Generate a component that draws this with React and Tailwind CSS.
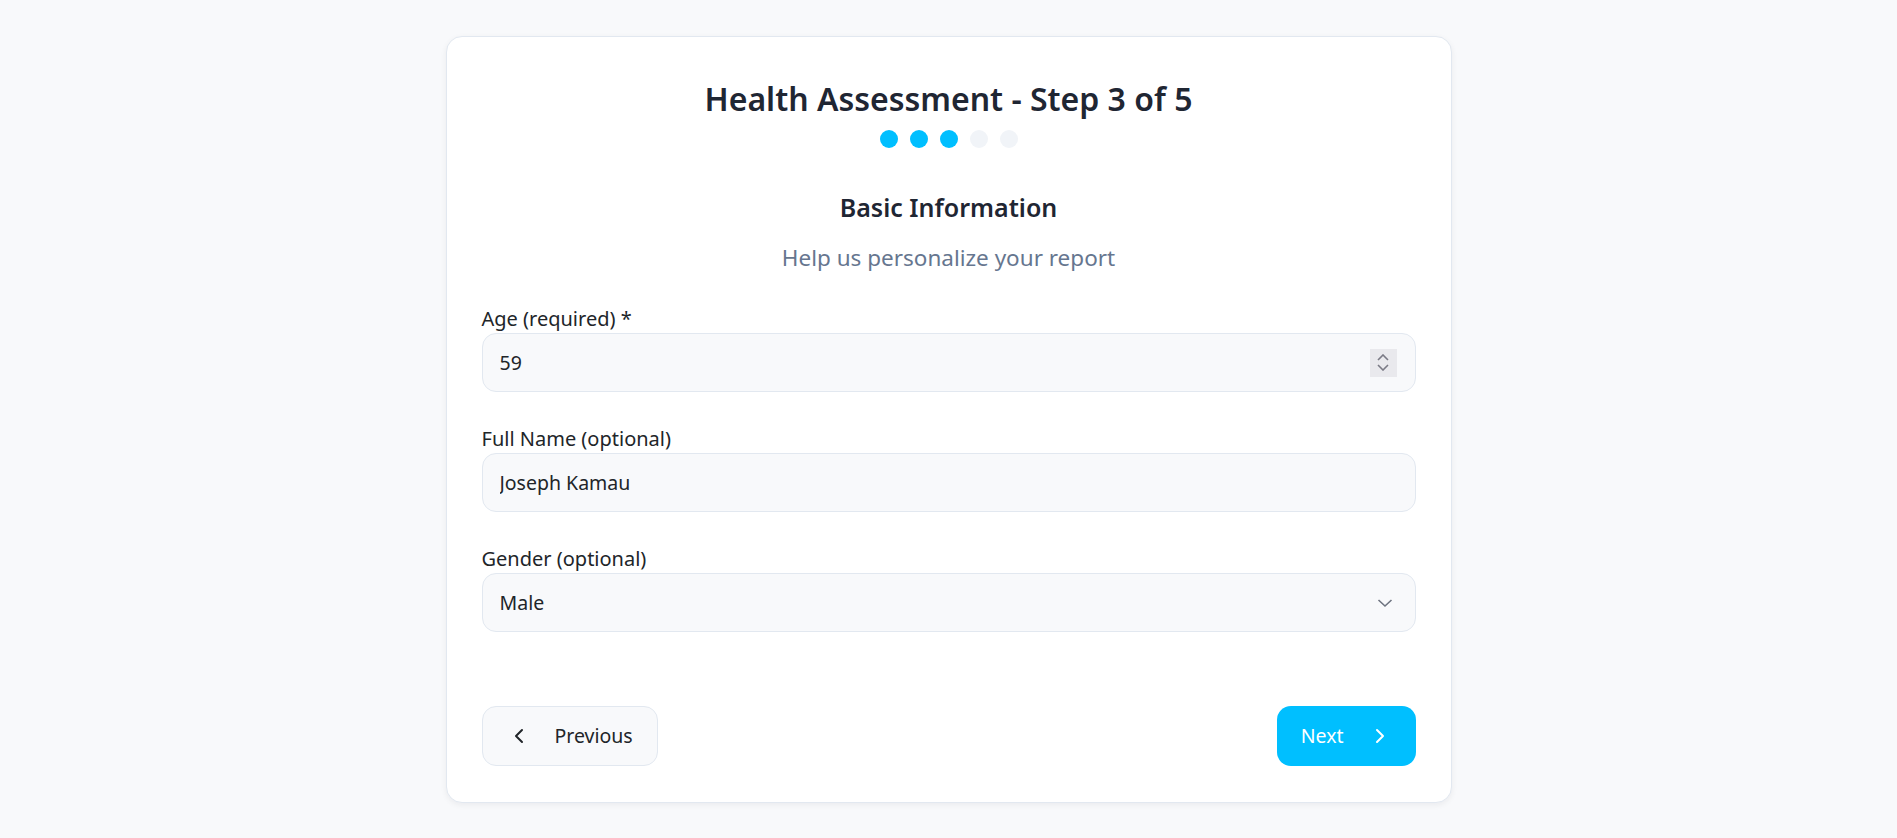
import { ChevronLeft, ChevronRight } from "lucide-react";

const steps = [1, 2, 3, 4, 5];
const current = 3;

const Field = ({ label, children }) => (
  <div>
    <label className="block text-[20px] leading-[28px] text-[#212529]">{label}</label>
    {children}
  </div>
);

export default function App() {
  return (
    <div className="min-h-screen bg-[#f8f9fb] flex justify-center pt-9 pb-9 font-['Noto_Sans','Open_Sans',sans-serif]">
      <div className="w-[1006px] bg-white border border-[#e2e8f0] rounded-2xl shadow-[0_2px_6px_rgba(15,23,42,0.06)] px-[35px] pt-[42px] pb-9">
        {/* Header */}
        <h1 className="text-center text-[32px] leading-[40px] font-semibold text-[#1f2633]">
          Health Assessment - Step 3 of 5
        </h1>
        <div className="flex justify-center gap-3 mt-[11px]">
          {steps.map((s) => (
            <span
              key={s}
              className={`w-[18px] h-[18px] rounded-full ${s <= current ? "bg-[#00bfff]" : "bg-[#f1f4f8]"}`}
            />
          ))}
        </div>

        <h2 className="text-center text-[25px] leading-[32px] font-semibold text-[#1f2633] mt-[43px]">
          Basic Information
        </h2>
        <p className="text-center text-[22.5px] leading-[28px] text-[#66768f] mt-[21px]">
          Help us personalize your report
        </p>

        {/* Form */}
        <div className="mt-[33px] flex flex-col gap-[33px]">
          <Field label="Age (required) *">
            <div className="relative">
              <input
                type="text"
                defaultValue="59"
                className="w-full h-[59px] rounded-[14px] border border-[#e2e8f0] bg-[#f8f9fb] pl-[17px] pr-12 text-[19.5px] text-[#212529] outline-none"
              />
              <div className="absolute right-[19px] top-1/2 -translate-y-1/2 w-[27px] h-[28px] bg-[#e9e9ed] flex flex-col items-center justify-center gap-[3px] text-[#7a7a85]">
                <svg width="12" height="7" viewBox="0 0 12 7" fill="none" stroke="currentColor" strokeWidth="1.6">
                  <path d="M1 6l5-5 5 5" />
                </svg>
                <svg width="12" height="7" viewBox="0 0 12 7" fill="none" stroke="currentColor" strokeWidth="1.6">
                  <path d="M1 1l5 5 5-5" />
                </svg>
              </div>
            </div>
          </Field>

          <Field label="Full Name (optional)">
            <input
              type="text"
              defaultValue="Joseph Kamau"
              className="w-full h-[59px] rounded-[14px] border border-[#e2e8f0] bg-[#f8f9fb] px-[17px] text-[19.5px] text-[#212529] outline-none"
            />
          </Field>

          <Field label="Gender (optional)">
            <div className="relative">
              <select
                defaultValue="male"
                className="appearance-none w-full h-[59px] rounded-[14px] border border-[#e2e8f0] bg-[#f8f9fb] pl-[17px] pr-12 text-[19.5px] text-[#212529] outline-none"
              >
                <option value="">Select</option>
                <option value="male">Male</option>
                <option value="female">Female</option>
                <option value="other">Other</option>
              </select>
              <svg
                className="absolute right-[23px] top-1/2 -translate-y-1/2 text-[#6e7480] pointer-events-none"
                width="16"
                height="9"
                viewBox="0 0 16 9"
                fill="none"
                stroke="currentColor"
                strokeWidth="1.6"
              >
                <path d="M1.5 1.5l6.5 6 6.5-6" />
              </svg>
            </div>
          </Field>
        </div>

        {/* Nav */}
        <div className="flex justify-between items-center mt-[74px]">
          <button
            type="button"
            className="h-[60px] flex items-center gap-6 px-6 rounded-[14px] border border-[#e2e8f0] bg-[#f8f9fb] text-[19.5px] text-[#212529]"
          >
            <ChevronLeft size={24} strokeWidth={2} />
            Previous
          </button>
          <button
            type="button"
            className="h-[60px] flex items-center gap-6 px-6 rounded-[14px] bg-[#00bfff] text-[19.5px] text-white"
          >
            Next
            <ChevronRight size={24} strokeWidth={2} />
          </button>
        </div>
      </div>
    </div>
  );
}
